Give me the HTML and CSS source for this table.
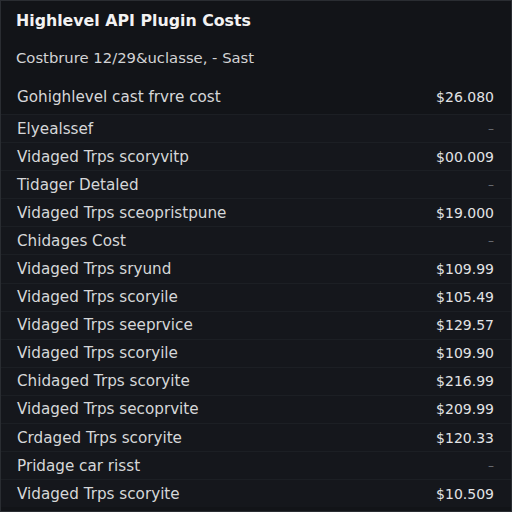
FILE: index.html
```html
<!DOCTYPE html>
<html>
<head>
<meta charset="utf-8">
<link rel="stylesheet" href="styles.css">
</head>
<body>
<div class="page">
  <header class="head">
    <h1 class="title">Highlevel API Plugin Costs</h1>
    <p class="sub">Costbrure 12/29&amp;uclasse, - Sast</p>
  </header>
  <ul class="rows">
    <li class="row first"><span>Gohighlevel cast frvre cost</span><span class="val">$26.080</span></li>
    <li class="row"><span>Elyealssef</span><span class="dash">–</span></li>
    <li class="row"><span>Vidaged Trps scoryvitp</span><span class="val">$00.009</span></li>
    <li class="row"><span>Tidager Detaled</span><span class="dash">–</span></li>
    <li class="row"><span>Vidaged Trps sceopristpune</span><span class="val">$19.000</span></li>
    <li class="row"><span>Chidages Cost</span><span class="dash">–</span></li>
    <li class="row"><span>Vidaged Trps sryund</span><span class="val">$109.99</span></li>
    <li class="row"><span>Vidaged Trps scoryile</span><span class="val">$105.49</span></li>
    <li class="row"><span>Vidaged Trps seeprvice</span><span class="val">$129.57</span></li>
    <li class="row"><span>Vidaged Trps scoryile</span><span class="val">$109.90</span></li>
    <li class="row"><span>Chidaged Trps scoryite</span><span class="val">$216.99</span></li>
    <li class="row"><span>Vidaged Trps secoprvite</span><span class="val">$209.99</span></li>
    <li class="row"><span>Crdaged Trps scoryite</span><span class="val">$120.33</span></li>
    <li class="row"><span>Pridage car risst</span><span class="dash">–</span></li>
    <li class="row"><span>Vidaged Trps scoryite</span><span class="val">$10.509</span></li>
  </ul>
</div>
</body>
</html>
```
FILE: styles.css
```css
html, body {
  margin: 0;
  padding: 0;
  background: #121418;
}
.page {
  box-sizing: border-box;
  width: 512px;
  height: 512px;
  border: 1px solid #2a2d32;
  background: #121418;
  font-family: "DejaVu Sans", "Noto Sans", sans-serif;
  color: #d6d7d9;
  overflow: hidden;
}
.head {
  padding: 9px 15px 0 15px;
}
.title {
  margin: 0;
  font-size: 15.8px;
  line-height: 22px;
  font-weight: bold;
  color: #f2f2f2;
}
.sub {
  margin: 17px 0 0 0;
  font-size: 14.8px;
  line-height: 18px;
  color: #d2d3d5;
}
.rows {
  list-style: none;
  margin: 13px 0 0 0;
  padding: 0;
}
.row {
  display: flex;
  justify-content: space-between;
  align-items: center;
  height: 28.1px;
  padding: 0 17px 0 16px;
  border-top: 1px solid #1c1f24;
  box-sizing: border-box;
  background: #15171c;
  font-size: 15.2px;
}
.row.first {
  height: 34px;
  border-top: none;
  background: #121418;
}
.val {
  color: #e2e3e5;
  font-size: 14px;
}
.dash {
  color: #6c6f75;
  font-size: 12px;
}
```
